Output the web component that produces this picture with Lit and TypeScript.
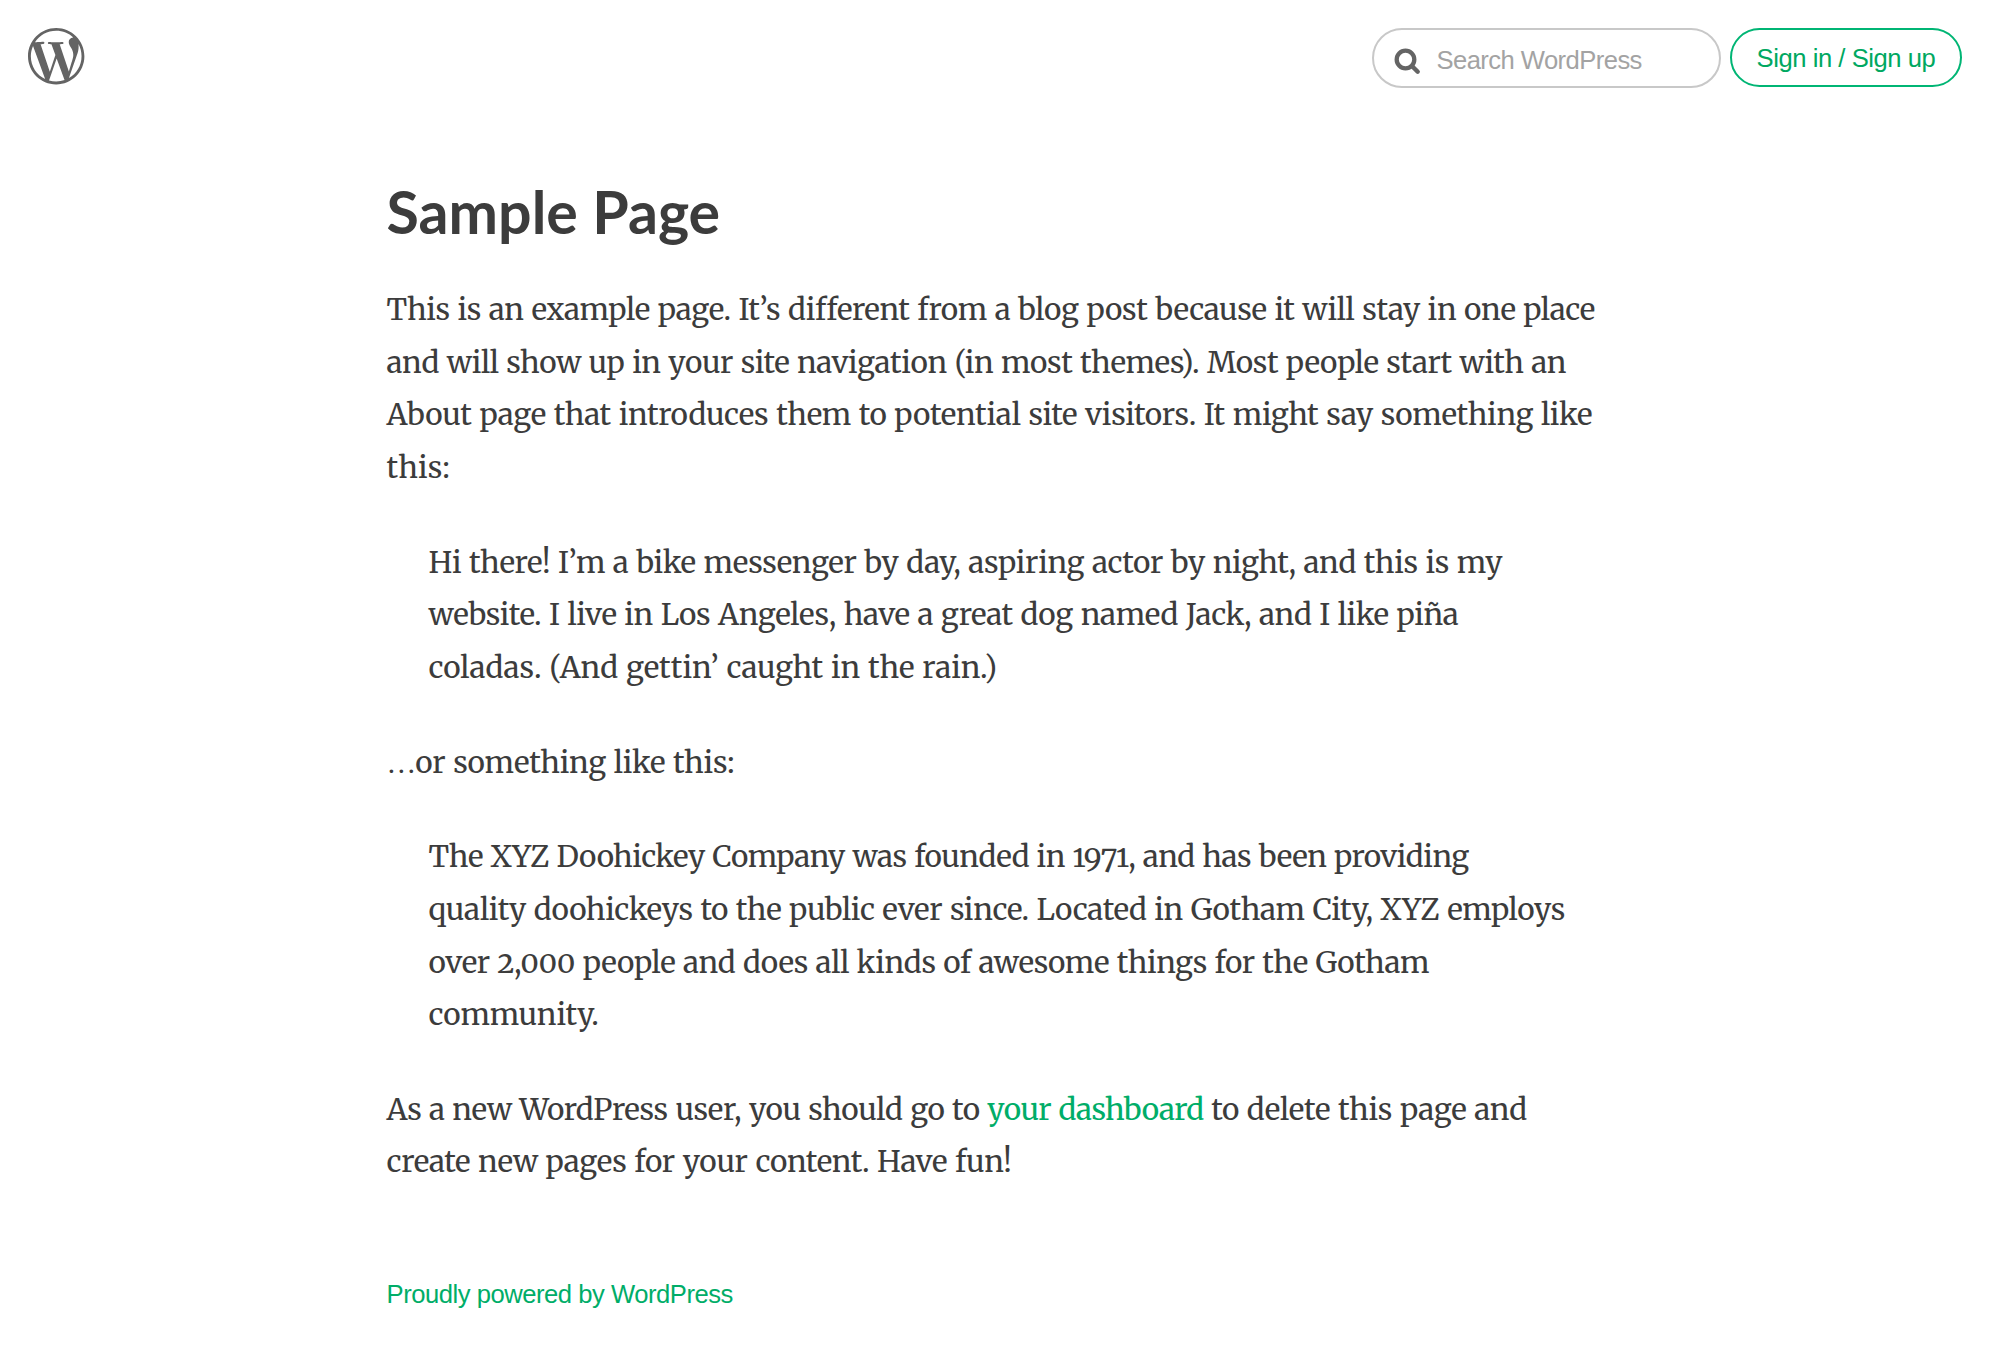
import { LitElement, html, css, svg } from "lit";

type Run = { text: string; ls: number; href?: string; dots?: boolean };
type Block = { quote: boolean; lines: Run[][] };

const run = (text: string, ls: number, href?: string): Run => ({ text, ls, href });

// Each line carries its own tracking, in pixels.
const BLOCKS: Block[] = [
  {
    quote: false,
    lines: [
      [run("This is an example page. It’s different from a blog post because it will stay in one place", -0.315)],
      [run("and will show up in your site navigation (in most themes). Most people start with an", -0.352)],
      [run("About page that introduces them to potential site visitors. It might say something like", -0.268)],
      [run("this:", 0.2)],
    ],
  },
  {
    quote: true,
    lines: [
      [run("Hi there! I’m a bike messenger by day, aspiring actor by night, and this is my", -0.298)],
      [run("website. I live in Los Angeles, have a great dog named Jack, and I like piña", -0.32)],
      [run("coladas. (And gettin’ caught in the rain.)", -0.08)],
    ],
  },
  { quote: false, lines: [[{ text: "…", ls: -1, dots: true }, run("or something like this:", -0.22)]] },
  {
    quote: true,
    lines: [
      [run("The XYZ Doohickey Company was founded in 1971, and has been providing", -0.485)],
      [run("quality doohickeys to the public ever since. Located in Gotham City, XYZ employs", -0.315)],
      [run("over 2,000 people and does all kinds of awesome things for the Gotham", -0.385)],
      [run("community.", -0.1)],
    ],
  },
  {
    quote: false,
    lines: [
      [run("As a new WordPress user, you should go to ", -0.395), run("your dashboard", -0.57, "#"), run(" to delete this page and", -0.25)],
      [run("create new pages for your content. Have fun!", -0.27)],
    ],
  },
];

const logo = svg`<path fill-rule="evenodd" d="M21.469 6.825c.84 1.537 1.318 3.3 1.318 5.175 0 3.979-2.156 7.456-5.363 9.325l3.295-9.527c.615-1.54.82-2.771.82-3.864 0-.405-.026-.78-.07-1.11m-7.981.105c.647-.03 1.232-.105 1.232-.105.582-.075.514-.93-.067-.899 0 0-1.755.135-2.88.135-1.064 0-2.85-.15-2.85-.15-.585-.03-.661.855-.075.885 0 0 .54.061 1.125.09l1.68 4.605-2.37 7.08L5.354 6.9c.649-.03 1.234-.1 1.234-.1.585-.075.516-.93-.065-.896 0 0-1.746.138-2.874.138-.2 0-.438-.008-.69-.015C4.911 3.15 8.235 1.215 12 1.215c2.809 0 5.365 1.072 7.286 2.833-.046-.003-.091-.009-.141-.009-1.06 0-1.812.923-1.812 1.914 0 .89.513 1.643 1.06 2.531.411.72.89 1.643.89 2.977 0 .915-.354 1.994-.821 3.479l-1.075 3.585-3.9-11.61.001.014zM12 22.784c-1.059 0-2.081-.153-3.048-.437l3.237-9.406 3.315 9.087c.024.053.05.101.078.149-1.12.393-2.325.609-3.582.609M1.211 12c0-1.564.336-3.05.935-4.39L7.29 21.709C3.694 19.96 1.212 16.271 1.211 12M12 0C5.385 0 0 5.385 0 12s5.385 12 12 12 12-5.385 12-12S18.615 0 12 0"/>`;

class AppRoot extends LitElement {
  static styles = css`
    :host {
      display: block;
      min-height: 1367px;
      background: #fff;
      color: #3c3c3c;
      font-family: "Liberation Sans", Arial, sans-serif;
    }
    .header {
      display: flex;
      align-items: flex-start;
      box-sizing: border-box;
      height: 175.5px;
      padding: 28.4px 38px 0 28.3px;
    }
    .logo {
      width: 56.4px;
      height: 56.4px;
      fill: #646464;
      margin-right: auto;
    }
    .search {
      box-sizing: border-box;
      display: flex;
      align-items: center;
      width: 349px;
      height: 60px;
      margin-right: 9px;
      padding-left: 20px;
      border: 2px solid #c8c8c8;
      border-radius: 30px;
      font-size: 25.6px;
      line-height: 30px;
      letter-spacing: -0.56px;
      color: #a3a3a3;
      white-space: nowrap;
    }
    .placeholder {
      padding-top: 4px;
    }
    .glass {
      width: 28px;
      height: 28px;
      margin-right: 15px;
      margin-top: 7px;
      fill: none;
      stroke: #646464;
    }
    .sign {
      box-sizing: border-box;
      width: 232.5px;
      height: 59px;
      border: 2px solid #00b574;
      border-radius: 30px;
      padding-left: 25px;
      font-size: 25.6px;
      line-height: 57px;
      letter-spacing: -0.44px;
      color: #00a861;
      text-decoration: none;
      white-space: nowrap;
    }
    .content {
      width: 1220px;
      padding-left: 386.6px;
    }
    .title {
      margin: 0 0 36.8px;
      font: 700 59.1px/72px Lato, sans-serif;
    }
    .block {
      margin: 0 0 42.1px;
      font: 400 29.7px/52.6px Merriweather, "DejaVu Serif Condensed", "DejaVu Serif", serif;
      font-variant-numeric: oldstyle-nums;
      word-spacing: 1px;
    }
    .quote {
      padding-left: 42px;
    }
    .line {
      display: block;
      height: 52.6px;
      white-space: pre;
    }
    .dots {
      font-family: "Liberation Serif", serif;
      line-height: 1;
    }
    .link {
      color: #00ad68;
      text-decoration: none;
    }
    .footer {
      display: block;
      margin-top: 85px;
      font-size: 25.6px;
      line-height: 40px;
      letter-spacing: -0.47px;
      color: #00ad68;
      text-decoration: none;
    }
  `;

  private renderRun(r: Run) {
    const style = `letter-spacing:${r.ls}px`;
    return r.href
      ? html`<a class="link" href=${r.href} style=${style}>${r.text}</a>`
      : html`<span class=${r.dots ? "dots" : "text"} style=${style}>${r.text}</span>`;
  }

  render() {
    return html`
      <header class="header">
        <svg class="logo" viewBox="0 0 24 24">${logo}</svg>
        <div class="search">
          <svg class="glass" viewBox="0 0 28 28">
            <circle cx="11.5" cy="11.5" r="8.8" stroke-width="4.3" />
            <path d="M18.2 18.2l5.5 5.5" stroke-width="4.4" stroke-linecap="round" />
          </svg>
          <span class="placeholder">Search WordPress</span>
        </div>
        <a class="sign" href="#">Sign in / Sign up</a>
      </header>
      <main class="content">
        <h1 class="title">Sample Page</h1>
        ${BLOCKS.map(
          (b) => html`<div class="block ${b.quote ? "quote" : ""}">${b.lines.map(
            (line) => html`<span class="line">${line.map((r) => this.renderRun(r))}</span>`
          )}</div>`
        )}
        <a class="footer" href="#">Proudly powered by WordPress</a>
      </main>
    `;
  }
}

customElements.define("app-root", AppRoot);
